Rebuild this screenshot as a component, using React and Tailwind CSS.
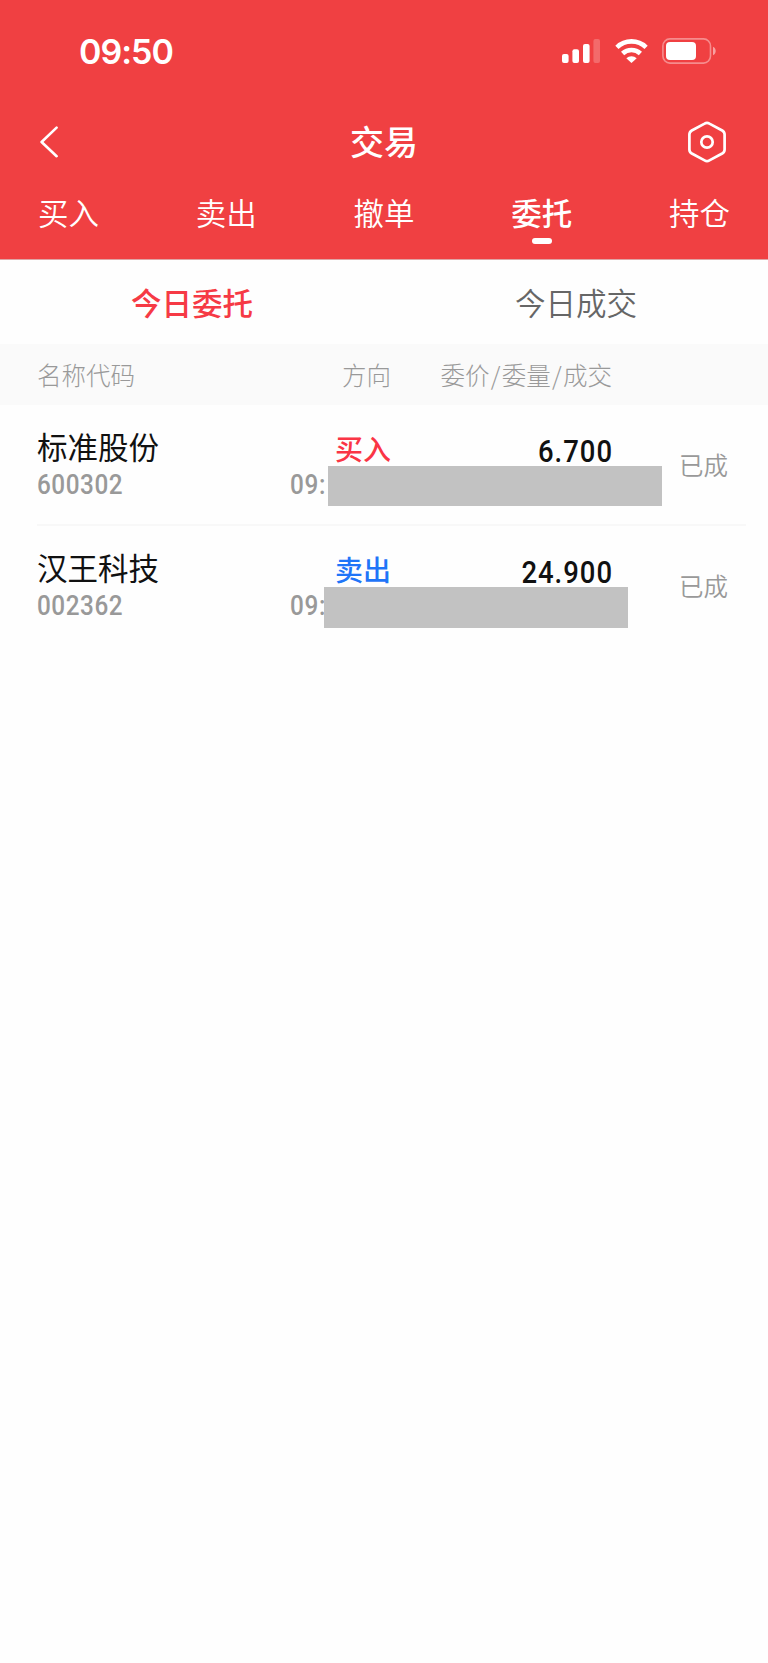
import clsx from 'clsx';

const tabs = ['买入', '卖出', '撤单', '委托', '持仓'];

const orders = [
  {
    code: '600302',
    name: '标准股份',
    time: '09:',
    side: 'buy',
    price: '6.700',
    status: '已成',
    mask: 'left-[328px] top-[61px] w-[334px] h-10',
  },
  {
    code: '002362',
    name: '汉王科技',
    time: '09:',
    side: 'sell',
    price: '24.900',
    status: '已成',
    mask: 'left-[324px] top-[61px] w-[304px] h-[41px]',
  },
];

function StatusBar() {
  return (
    <div className="flex h-[102px] items-center justify-between pl-[79px] pr-[52px]">
      <span className="pt-[2px] font-['Inter','Liberation_Sans',sans-serif] text-[34px] font-semibold leading-none tracking-[-1px]">
        09:50
      </span>
      <div className="flex items-center">
        {/* Signal */}
        <svg className="h-6 w-[39px]" viewBox="0 0 39 24" fill="#fff">
          <rect x="0" y="15" width="6.6" height="9" rx="2" />
          <rect x="10.4" y="10.2" width="6.6" height="13.8" rx="2" />
          <rect x="21" y="5" width="6.6" height="19" rx="2" />
          <rect x="31.4" y="0" width="6.6" height="24" rx="2" opacity="0.22" />
        </svg>
        {/* Wifi */}
        <svg className="ml-[14px] h-6 w-[33px]" viewBox="0 0 33 24" fill="none" stroke="#fff" strokeWidth="4.6">
          <path d="M1.9 8.3a21 21 0 0 1 29.2 0" />
          <path d="M7.6 14.5a12.9 12.9 0 0 1 17.8 0" />
          <path d="M16.5 24l-5.2-4.8a7.6 7.6 0 0 1 10.4 0z" fill="#fff" stroke="none" />
        </svg>
        {/* Battery */}
        <svg className="ml-[14px] h-[26px] w-[54px]" viewBox="0 0 54 26" fill="none">
          <rect x="0.9" y="0.9" width="47.6" height="24.2" rx="7" stroke="#fff" strokeWidth="1.6" opacity="0.4" />
          <rect x="4" y="4" width="30" height="18" rx="4" fill="#fff" />
          <path d="M51 8.8c3.6 1.6 3.6 6.8 0 8.4z" fill="#fff" opacity="0.5" />
        </svg>
      </div>
    </div>
  );
}

function TitleBar() {
  return (
    <div className="flex h-20 items-center justify-between px-10">
      <svg className="h-8 w-[60px]" viewBox="0 0 60 32" fill="none" stroke="#fff" strokeWidth="2.6" strokeLinecap="round" strokeLinejoin="round">
        <path d="M16.6 1.6L1.6 16l15 14.2" />
      </svg>
      <h1 className="pb-[3px] text-[34px] font-medium leading-none">交易</h1>
      <div className="flex w-[60px] justify-end">
        <svg className="h-[42px] w-[42px]" viewBox="0 0 42 42" fill="none" stroke="#fff" strokeWidth="2.7" strokeLinejoin="round">
          <path d="M18.6 2.6Q21 1.2 23.4 2.6L36.2 9.5Q38.6 10.9 38.6 13.6V28.4Q38.6 31.1 36.2 32.5L23.4 39.4Q21 40.8 18.6 39.4L5.8 32.5Q3.4 31.1 3.4 28.4V13.6Q3.4 10.9 5.8 9.5Z" />
          <circle cx="21" cy="21" r="5.7" />
        </svg>
      </div>
    </div>
  );
}

function Header() {
  return (
    <header className="h-[260px] border-b border-[#dfa5a5] bg-[#f04042] text-white">
      <StatusBar />
      <TitleBar />
      <nav className="flex justify-between px-[38px] pt-[15px]">
        {tabs.map((tab) => (
          <div key={tab} className="flex flex-col items-center">
            <span
              className={clsx(
                'text-[30.5px] leading-[30px]',
                tab === '委托' ? 'font-medium' : 'font-[350]'
              )}
            >
              {tab}
            </span>
            {tab === '委托' && <span className="mt-[11px] h-[6px] w-5 rounded-full bg-white" />}
          </div>
        ))}
      </nav>
    </header>
  );
}

function OrderRow({ order }) {
  return (
    <li className="group relative flex h-[121px] pl-[37px] pr-[22px]">
      <div className="flex h-full w-full border-b-2 border-[#f8f8f8] pr-[18px] group-last:border-transparent">
        <div className="w-[252px] pt-[25px]">
          <p className="text-[30.5px] leading-[32px] text-[#111]">{order.name}</p>
          <p className="mt-[7px] origin-left scale-x-[0.9] font-['Roboto',sans-serif] text-[27px] font-medium leading-8 tracking-[0.6px] text-[#999]">
            {order.code}
          </p>
        </div>
        <div className="w-[102px] pt-[27px]">
          <p
            className={clsx(
              'text-right text-[28px] font-medium leading-8',
              order.side === 'buy' ? 'text-[#fa3545]' : 'text-[#1f75f8]'
            )}
          >
            {order.side === 'buy' ? '买入' : '卖出'}
          </p>
          <p className="mt-[5px] ml-px origin-left scale-x-[0.9] font-['Roboto',sans-serif] text-[27px] font-medium leading-8 tracking-[0.7px] text-[#999]">
            {order.time}
          </p>
        </div>
        <p className="w-[221px] origin-right translate-x-px scale-x-[0.9] pt-[31px] text-right font-['Roboto',sans-serif] text-[30.5px] font-medium leading-8 tracking-[1.1px] text-[#111]">
          {order.price}
        </p>
        <p className="flex-1 pt-11 text-right text-[24.5px] font-[350] leading-8 text-[#999]">{order.status}</p>
      </div>
      {/* Hidden fill details */}
      <div className={clsx('absolute bg-[#c2c2c2]', order.mask)} />
    </li>
  );
}

export default function App() {
  return (
    <div className="min-h-screen w-full bg-[#fefefe] font-['Noto_Sans_CJK_SC',sans-serif]">
      <Header />

      <div className="flex h-[84px] items-center text-center text-[30.5px] leading-none">
        <button className="flex-1 font-medium text-[#f63a45]">今日委托</button>
        <button className="flex-1 font-[350] text-[#666]">今日成交</button>
      </div>

      <div className="flex h-[61px] items-center bg-[#fafafa] pl-[37px] pt-[2px] text-[24.5px] font-light leading-none text-[#999]">
        <span className="w-[252px]">名称代码</span>
        <span className="w-[102px] text-right">方向</span>
        <span className="w-[221px] text-right">
          委价<span className="mx-[1.3px]">/</span>委量<span className="mx-[1.3px]">/</span>成交
        </span>
      </div>

      <ul>
        {orders.map((order) => (
          <OrderRow key={order.code} order={order} />
        ))}
      </ul>
    </div>
  );
}
